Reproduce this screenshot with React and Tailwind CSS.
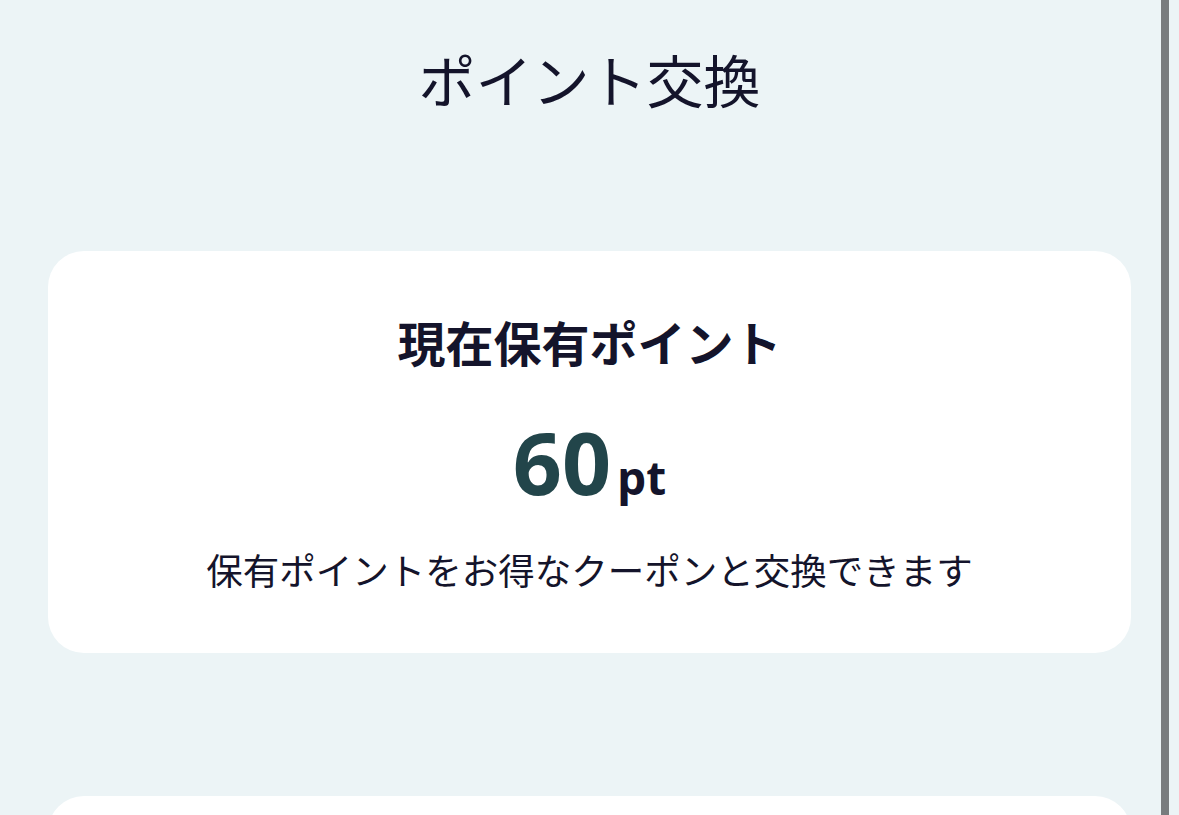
import React from 'react';

const jp = "font-['Noto_Sans_CJK_JP','Noto_Sans',sans-serif]";
const latin = "font-['Noto_Sans','Noto_Sans_CJK_JP',sans-serif]";

function PointsCard({ points }) {
  return (
    <section className="flex flex-col items-center rounded-[36px] bg-white pt-[54px] pb-[56px]">
      <h2 className="text-[48px] font-bold leading-[72px] text-[#14142b]">現在保有ポイント</h2>
      <div className={`mt-[42px] flex h-[90px] items-baseline leading-none ${latin}`}>
        <span className="text-[86px] font-bold leading-none text-[#22454a]">{points}</span>
        <span className="ml-[6px] text-[46px] font-bold text-[#14142b]">pt</span>
      </div>
      <p className="mt-[34px] text-[36.5px] leading-[54px] text-[#14142b]">
        保有ポイントをお得なクーポンと交換できます
      </p>
    </section>
  );
}

export default function App() {
  return (
    <div className={`relative h-[815px] overflow-hidden bg-[#ecf4f6] ${jp}`}>
      <h1 className="pt-[36px] text-center text-[57px] leading-[84px] text-[#14142b]">ポイント交換</h1>
      <div className="mt-[131px] flex flex-col gap-[143px] px-[48px]">
        <PointsCard points={60} />
        {/* coupon list card, cut off by the viewport */}
        <section className="h-[400px] rounded-[36px] bg-white" />
      </div>
      {/* overlay scrollbar */}
      <div className="absolute top-0 right-[10px] h-full w-[8px] bg-[#787c7e]" />
    </div>
  );
}
